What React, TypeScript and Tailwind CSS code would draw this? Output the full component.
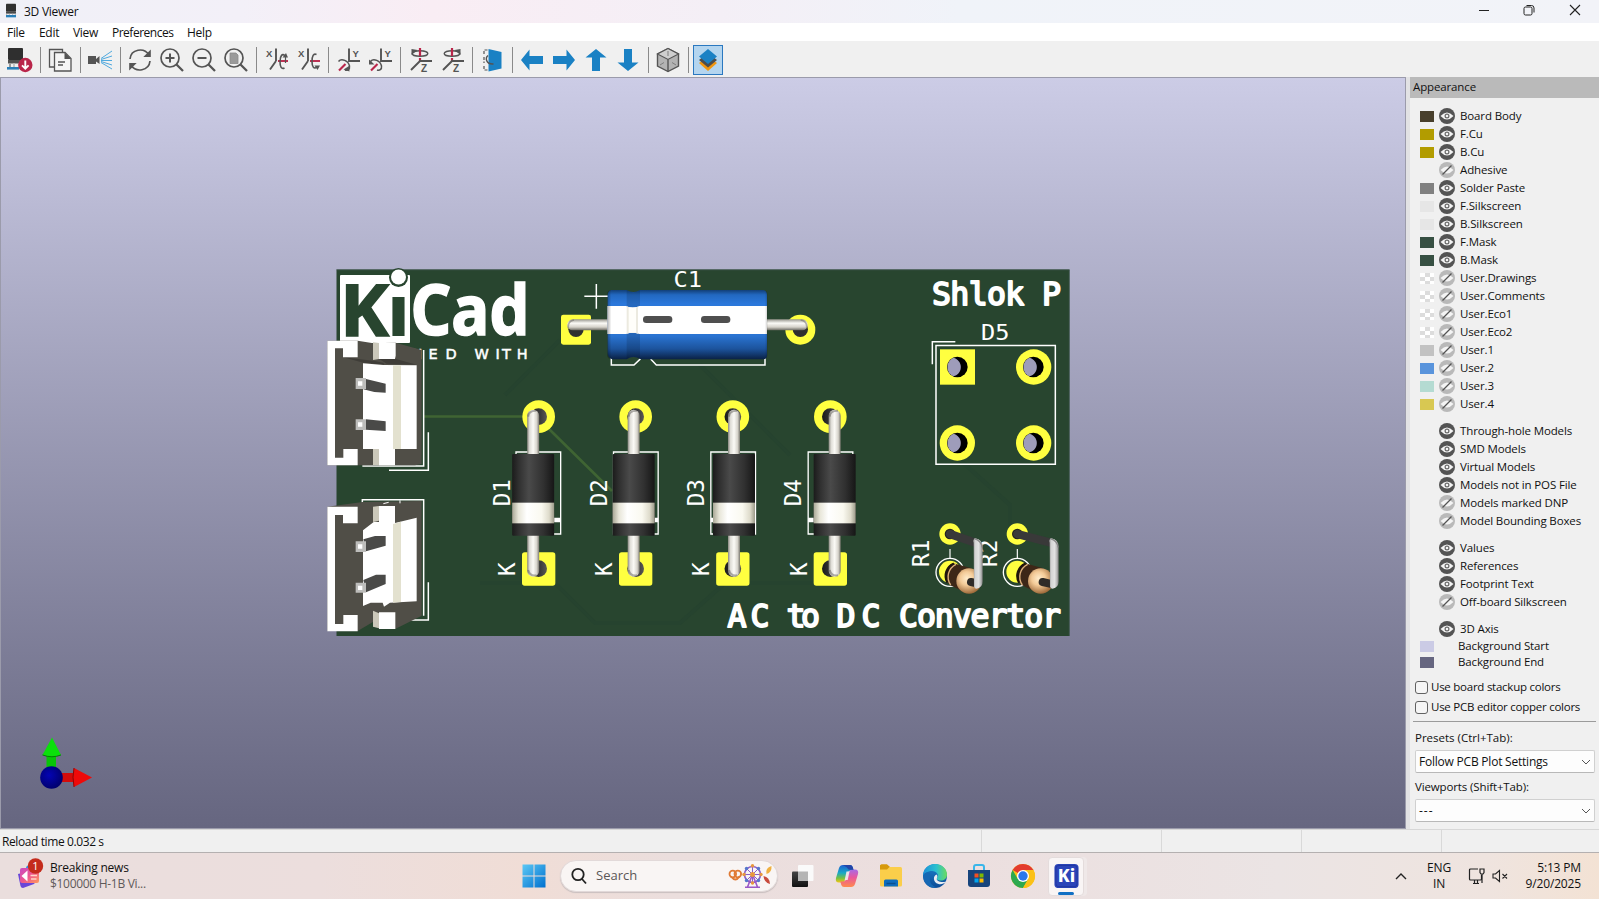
import React from "react";

type Kids = { children?: React.ReactNode };

/* ---------- toolbar icons, drawn on a 26 unit grid ---------- */
const G = "#545454";
const R = "#b9264a";
const B = "#1a81c4";

function Ico({ children }: Kids) {
  return (
    <svg width="26" height="26" viewBox="0 0 26 26" fill="none" stroke={G} strokeWidth="1.7">
      {children}
    </svg>
  );
}

function Chip({ size = 24 }: { size?: number }) {
  return (
    <svg width={size} height={size} viewBox="0 0 24 24">
      <rect x="3" y="1" width="15" height="12" rx="1" fill="#303030" />
      <rect x="3" y="13" width="15" height="3" fill="#4a4a4a" />
      <path d="M4 16v5M8 16v4M13 16v4M17 16v5" stroke="#bbb" strokeWidth="1.6" />
      <rect x="3" y="18" width="15" height="3.500" fill="#2a7fb8" />
    </svg>
  );
}

const ReloadBoard = () => (
  <Ico>
    <g stroke="none">
      <rect x="1" y="1" width="15" height="12" rx="1" fill="#2f2f2f" />
      <rect x="1" y="13" width="15" height="3.5" fill="#505050" />
      <rect x="2" y="16.5" width="2" height="4" fill="#999" />
      <rect x="6" y="16.5" width="2" height="4" fill="#c4c4c4" />
      <rect x="0" y="20" width="12" height="2.6" fill="#2a7fb8" />
      <circle cx="18.3" cy="18" r="7.2" fill={R} />
    </g>
    <path d="M18.3 13.5v8M15 18.4l3.3 3.3 3.3-3.3" stroke="#fff" strokeWidth="1.9" />
  </Ico>
);
const Copy = () => (
  <Ico>
    <path d="M7 20H2.5V2.5h13V6" strokeWidth="1.3" />
    <path d="M7.5 5.5h10.500l6 6v12.500h-16.500z" fill="#f5f5f5" strokeWidth="1.3" />
    <path d="M17.500 5.500v6.500h6.500z" fill={G} stroke="none" />
    <path d="M11 15h7M11 18h5" strokeWidth="1.300" />
  </Ico>
);
const Raytrace = () => (
  <Ico>
    <path d="M1 9h8v3l3.500-3v8L9 14.500V17H1z" fill={G} stroke="none" />
    <path d="M14 11.500L25 4M14 12.500L25 9M14 13.500L25 13.500M14 14.500L25 18M14 15.500L25 22" stroke="#4fa9de" strokeWidth="1" />
  </Ico>
);
const Refresh = () => (
  <Ico>
    <path d="M3 12C4 2 17 0 22 8" />
    <path d="M23.800 2.500v7.500h-7.500z" fill={G} stroke="none" />
    <path d="M23 14C22 24 9 26 4 18" />
    <path d="M2.200 23.500V16h7.500z" fill={G} stroke="none" />
  </Ico>
);
function Lens({ children }: Kids) {
  return (
    <Ico>
      <circle cx="11" cy="11" r="9" />
      <path d="M17.500 17.500L24 24" strokeWidth="2.300" />
      {children}
    </Ico>
  );
}
const ZoomIn = () => (
  <Lens>
    <path d="M6.500 11h9M11 6.500v9" strokeWidth="2" />
  </Lens>
);
const ZoomOut = () => (
  <Lens>
    <path d="M6.500 11h9" strokeWidth="2" />
  </Lens>
);
const ZoomFit = () => (
  <Lens>
    <path d="M7 6h6l2 2v8.500H7z" fill="#9a9a9a" stroke="#8a8a8a" strokeWidth="0.800" />
  </Lens>
);
const RotX = ({ flip = false }: { flip?: boolean }) => (
  <Ico>
    <text x="3" y="9.500" fontSize="9.500" fontWeight="700" fontFamily="Liberation Sans" fill={G} stroke="none">X</text>
    <path d="M13 1.500v12.500M13 14L7 22.500" strokeWidth="1.900" />
    <path d="M15 14H25" stroke={R} strokeWidth="1.900" />
    {flip ? (
      <g>
        <path d="M21.500 7.500C18.500 6 17 9 17 14.500C17 20 19 22.500 22 20" strokeWidth="1.600" />
        <path d="M19.500 18.500h5.500l-2.500 4.500z" fill={G} stroke="none" />
      </g>
    ) : (
      <g>
        <path d="M22 9C19.500 5.500 17 9 17 14.500C17 20 18.500 22.500 21.500 21" strokeWidth="1.600" />
        <path d="M19.500 10.500h5.500l-2-4.500z" fill={G} stroke="none" />
        <path d="M22.500 10v6" strokeWidth="1.200" />
      </g>
    )}
  </Ico>
);
const RotY = ({ flip = false }: { flip?: boolean }) => (
  <Ico>
    <text x="17.500" y="9.500" fontSize="9.500" fontWeight="700" fontFamily="Liberation Sans" fill={G} stroke="none">Y</text>
    <path d="M14 1.500v12.500H25" strokeWidth="1.900" />
    <path d="M10.500 17L4 23.500" stroke={R} strokeWidth="2.200" />
    <path d="M3.500 14.500C6.500 10.500 13.500 14 14.500 19C15 22.500 12.500 24 10 23" strokeWidth="1.500" />
    {flip ? (
      <path d="M2 12.500v5h5.500z" fill={G} stroke="none" />
    ) : (
      <path d="M8.500 22.500l5.500-3.500.5 5.500z" fill={G} stroke="none" />
    )}
  </Ico>
);
const RotZ = ({ flip = false }: { flip?: boolean }) => (
  <Ico>
    <text x="14" y="25" fontSize="10" fontWeight="700" fontFamily="Liberation Sans" fill={G} stroke="none">Z</text>
    <ellipse cx="13" cy="6.500" rx="7.800" ry="2.800" strokeWidth="1.400" />
    <path d="M13 1v8M13 11v3" stroke={R} strokeWidth="2.200" />
    <path d="M4 23L13 14H25" strokeWidth="1.900" />
    {flip ? (
      <path d="M15.500 3l6-1v6z" fill={G} stroke="none" />
    ) : (
      <path d="M10.500 3l-6-1v6z" fill={G} stroke="none" />
    )}
  </Ico>
);
const FlipBoard = () => (
  <Ico>
    <path d="M9.500 2l13 3v16.500L9.500 24.500z" fill={B} stroke="none" />
    <path d="M8.500 3H5v4M5 19v4H8.500M5 10v6" strokeWidth="1.200" strokeDasharray="3 1.500" />
    <path d="M9 8.500C6 11 7 17.500 14.500 17" strokeWidth="1.400" />
  </Ico>
);
const Arrow = ({ turn }: { turn: number }) => (
  <Ico>
    <path transform={`rotate(${turn} 13 13)`} d="M2 13L10.500 2.500V9H24v8H10.500v6.500z" fill={B} stroke="none" />
  </Ico>
);
const Cube = () => (
  <Ico>
    <path d="M13 1.500L23.500 7v12L13 24.500 2.500 19V7z" fill="#b3b3b3" strokeWidth="1.400" />
    <path d="M13 1.500L23.500 7 13 12.500 2.500 7z" fill="#cfcfcf" strokeWidth="1.100" />
    <path d="M13 12.500v12" strokeWidth="1.400" />
    <path d="M13 4v5M5 18l4-2.500M21 18l-4-2.500" stroke="#777" strokeWidth="0.900" />
  </Ico>
);
const Layers = () => (
  <Ico>
    <path d="M13 9.500l9 6.500L13 24 4 16z" fill="#f0960f" stroke="none" />
    <path d="M13 6l9 7-9 7.500L4 13z" fill="#4d4d4d" stroke="none" />
    <path d="M13 2L22 9.500 13 17 4 9.500z" fill={B} stroke="none" />
  </Ico>
);

const Tool = ({ children }: Kids) => <div className="flex h-8 w-8 items-center justify-center">{children}</div>;
const Sep = () => (
  <div className="flex h-[26px] w-2 justify-center">
    <div className="h-full w-px bg-[#8a8a8a]" />
  </div>
);

/* ---------- 3D scene ---------- */
const MONO = '"DejaVu Sans Mono", monospace';
const YEL = "#ffff40";
const DARK = "#504e47";

function Connector1() {
  return (
    <g>
      <path d="M127 618H311V270M207 631H325V517" fill="none" stroke="#fff" strokeWidth="4.500" />
      <path fill={DARK} d="M22 242H113L160 250 227 248 305 270V612L285 616H22z" />
      <path fill="#3f3d38" d="M70 292L165 303 191 309V314L130 308zM177 296L225 296 290 314 200 311z" />
      <path fill="#fff" d="M129 310L190 315 290 316V567H129z" />
      <path fill="#e3e1cf" d="M219 316H243V567H219z" />
      <path fill="#fff" d="M22 242H113V292H69V265H45V593H70V567H113V616H22z" />
      <path fill="#cbc8ba" d="M159 247L177 249V297L159 300zM159 567H177V615H159z" />
      <path fill="#fff" d="M177 249L227 248V287L225 297H177zM177 567H225V616H177z" />
      <path fill="#4a4a48" d="M138 357L197 371V398L163 396 130 388zM138 478L197 484V513L138 509z" />
      <path fill="#bdbdbb" d="M107 354H138V387H107zM107 478H138V510H107z" />
      <path fill="#fff" d="M114 364H127V377H114zM114 487H127V500H114z" />
    </g>
  );
}
function Connector2() {
  return (
    <g>
      <path d="M127 728V719H311V1067M325 967V1080H272" fill="none" stroke="#fff" strokeWidth="4.500" />
      <path fill={DARK} d="M22 740L128 726 305 723V1067L227 1106 160 1085 113 1113H22z" />
      <path d="M190 731L206 727M240 721V730" stroke="#fff" strokeWidth="3" />
      <path fill="#fff" d="M129 811L162 785 225 789 290 773V1024L210 1028 192 1040 188 1028H152L129 1038z" />
      <path fill="#e3e1cf" d="M219 792L243 785V1026L219 1028z" />
      <path fill="#fff" d="M22 740H113V790H69V765H45V1092H70V1065H113V1114H22z" />
      <path fill="#cbc8ba" d="M159 740L177 738V782L159 786zM159 1052L177 1060V1105L159 1100z" />
      <path fill="#fff" d="M177 738H225V790H177zM177 1057H226V1107H177z" />
      <path fill="#4a4a48" d="M130 838L165 828H197V857L138 874zM130 960L168 944H197V972L138 997z" />
      <path fill="#bdbdbb" d="M107 844H138V876H107zM107 968H138V998H107z" />
      <path fill="#fff" d="M114 853H127V866H114zM114 977H127V990H114z" />
    </g>
  );
}

const diodes = [
  { name: "D1", pad: 176, body: 159.5, silk: 108 },
  { name: "D2", pad: 467, body: 461, silk: 400.5 },
  { name: "D3", pad: 758.5, body: 762, silk: 692.5 },
  { name: "D4", pad: 1051, body: 1064, silk: 984.5 },
];

function Diode({ name, pad, body, silk }: (typeof diodes)[number]) {
  return (
    <g>
      <circle cx={pad} cy={80} r={49} fill={YEL} />
      <rect x={pad - 50} y={487} width={100} height={100} rx={8} fill={YEL} />
      <circle cx={pad} cy={80} r={25} fill="url(#hole)" />
      <circle cx={pad} cy={536} r={25} fill="url(#hole)" />
      <path d={`M${silk} 186H${silk + 134}V432H${silk}z`} fill="none" stroke="#fff" strokeWidth="4" />
      <path d={`M${silk} 390H${silk + 134}`} stroke="#fff" strokeWidth="14" />
      <rect x={body - 18} y={59} width={36} height={146} rx={18} fill="url(#lead)" />
      <rect x={body - 18} y={420} width={36} height={140} rx={18} fill="url(#lead)" />
      <path d={`M${body - 15} 80Q${body - 14} 61 ${body + 10} 62M${body - 15} 540Q${body - 10} 560 ${body + 10} 556`} fill="none" stroke="#55534e" strokeOpacity=".45" strokeWidth="6" />
      <rect x={body - 63} y={192} width={126} height={245} rx={3} fill="url(#body)" />
      <rect x={body - 63} y={338} width={126} height={62} fill="url(#band)" />
      <text transform={`translate(${pad - 87} 349) rotate(-90)`} fontFamily={MONO} fontSize="71" textLength="82" lengthAdjust="spacingAndGlyphs" fill="#fff">{name}</text>
      <text transform={`translate(${pad - 71} 558) rotate(-90)`} fontFamily={MONO} fontSize="68" textLength="42" fill="#fff">K</text>
    </g>
  );
}

function Resistor({ dx, body, lead }: { dx: number; body: number; lead: number }) {
  return (
    <g transform={`translate(${dx} 0)`}>
      <path d="M180 867V895" stroke="#fff" strokeWidth="3.500" />
      <circle cx="180" cy="937" r="42" fill="none" stroke="#fff" strokeWidth="4" />
      <circle cx="180" cy="935" r="33" fill={YEL} />
      <circle cx="180" cy="822" r="32" fill={YEL} />
      <circle cx="180" cy="822" r="16" fill="#222" />
      <path d={`M180 822L${255 + lead} 848`} stroke="#393939" strokeWidth="25" strokeLinecap="round" />
      <g transform={`translate(${body} 0)`}>
        <path fill="#3d2717" d="M190 910A38 38 0 0 0 180 975L222 996L245 925z" />
        <path d="M192 911A40 40 0 0 0 173 968" fill="none" stroke="#20150c" strokeWidth="8" />
        <path d="M198 913A42 42 0 0 0 182 975" fill="none" stroke="#ddb07a" strokeWidth="4" />
        <circle cx="237" cy="963" r="38" fill="url(#tan)" />
        <path d="M243 966L264 971" stroke="#2f2b28" strokeWidth="24" strokeLinecap="round" />
      </g>
      <g transform={`translate(${lead} 0)`}>
        <path fill="url(#wire)" d="M251 848Q247 840 255 835Q278 838 278 862V964Q278 984 260 986Q254 986 252 980z" />
        <path d="M253 836Q274 842 276 862" fill="none" stroke="#8a8a8a" strokeWidth="4" />
      </g>
    </g>
  );
}

function Hole({ x, y }: { x: number; y: number }) {
  return (
    <g>
      <circle cx={x} cy={y} r={31} fill="#000" />
      <path d={`M${x - 12} ${y - 28}A31 31 0 0 0 ${x - 12} ${y + 28}C${x + 18} ${y + 20} ${x + 18} ${y - 20} ${x - 12} ${y - 28}z`} fill="#9e9cba" />
    </g>
  );
}

function Scene() {
  return (
    <svg className="block h-full w-full" viewBox="1 78 1404 750" preserveAspectRatio="none">
      <defs>
        <linearGradient id="lead"><stop offset="0" stopColor="#87857e" /><stop offset=".2" stopColor="#dedcd6" /><stop offset=".5" stopColor="#fbfaf6" /><stop offset=".8" stopColor="#d6d3cb" /><stop offset="1" stopColor="#7a7870" /></linearGradient>
        <linearGradient id="leadH" x2="0" y2="1"><stop offset="0" stopColor="#99978f" /><stop offset=".35" stopColor="#fbfaf6" /><stop offset=".7" stopColor="#d6d3cb" /><stop offset="1" stopColor="#6a6860" /></linearGradient>
        <linearGradient id="body"><stop offset="0" stopColor="#1b1b1b" /><stop offset=".15" stopColor="#2f2f2f" /><stop offset=".4" stopColor="#4a4a4a" /><stop offset=".75" stopColor="#303030" /><stop offset="1" stopColor="#161616" /></linearGradient>
        <linearGradient id="band"><stop offset="0" stopColor="#a9a796" /><stop offset=".15" stopColor="#e8e6d9" /><stop offset=".35" stopColor="#fff" /><stop offset=".7" stopColor="#faf9f0" /><stop offset=".88" stopColor="#dedbcb" /><stop offset="1" stopColor="#9b9989" /></linearGradient>
        <linearGradient id="blue" x2="0" y2="1"><stop offset="0" stopColor="#123f78" /><stop offset=".07" stopColor="#2268c0" /><stop offset=".2" stopColor="#2b78db" /><stop offset=".66" stopColor="#2a74d2" /><stop offset=".85" stopColor="#1c539c" /><stop offset="1" stopColor="#0a2145" /></linearGradient>
        <linearGradient id="hole"><stop offset="0" stopColor="#1a1a1a" /><stop offset=".6" stopColor="#3b3b3b" /><stop offset="1" stopColor="#5b5854" /></linearGradient>
        <linearGradient id="wire" gradientUnits="userSpaceOnUse" x1="250" x2="279" y1="0" y2="0"><stop offset="0" stopColor="#9a9a9a" /><stop offset=".2" stopColor="#d4d4d4" /><stop offset=".55" stopColor="#e2e2e2" /><stop offset=".8" stopColor="#b4b4b4" /><stop offset="1" stopColor="#6f6f6f" /></linearGradient>
        <linearGradient id="side"><stop offset="0" stopColor="#000" stopOpacity=".3" /><stop offset=".025" stopColor="#000" stopOpacity="0" /><stop offset=".985" stopColor="#000" stopOpacity="0" /><stop offset="1" stopColor="#000" stopOpacity=".2" /></linearGradient>
        <radialGradient id="tan" cx=".42" cy=".4" r=".6"><stop offset="0" stopColor="#ffeccb" /><stop offset=".45" stopColor="#f3ca97" /><stop offset="1" stopColor="#a06c3c" /></radialGradient>
        <radialGradient id="ball" cx=".4" cy=".4" r=".6"><stop offset="0" stopColor="#0404b4" /><stop offset="1" stopColor="#01016f" /></radialGradient>
      </defs>

      <rect x="336.500" y="269.500" width="733" height="366.500" fill="#28452f" />
      <path d="M336.500 269.800H1069.500M1069.300 270V636" stroke="#435a55" strokeWidth=".7" />
      <path fill="none" stroke="#26432f" strokeWidth="4" d="M505 395L560 340M700 365L790 455M480 583H555L595 623H680L725 583H850M960 460L1010 505V530" />
      <path d="M423 416.500H530M548 428L612 491" stroke="#3f6433" strokeWidth="2.600" />

      <g fill="#fff">
        <path d="M341 275H409Q410 275 410 276V342Q410 343 409 343H341Q340 343 340 342V276Q340 275 341 275z" />
        <circle cx="398.500" cy="277.500" r="9.500" fill="#28452f" />
        <circle cx="398.500" cy="277" r="7.500" />
        <g fontFamily='"Noto Sans", sans-serif' fontWeight="700" strokeWidth="1.500">
          <text x="340" y="335.500" fontSize="71" textLength="49" lengthAdjust="spacingAndGlyphs" fill="#28452f" stroke="#28452f">K</text>
          <text x="386.500" y="335.500" fontSize="71" textLength="24" lengthAdjust="spacingAndGlyphs" fill="#28452f">ı</text>
          <text x="410.500" y="335" fontSize="70" textLength="119" lengthAdjust="spacingAndGlyphs" stroke="#fff">Cad</text>
        </g>
        <text x="411.500 428.500 445.500 462 474.500 495.500 502 516.800" y="359" fontFamily='"DejaVu Sans", sans-serif' fontSize="14.500" stroke="#fff" strokeWidth=".5">NED WITH</text>
        <g fontFamily={MONO}>
          <text x="673.500" y="286.500" fontSize="22" textLength="28.500" lengthAdjust="spacingAndGlyphs">C1</text>
          <text x="981" y="340" fontSize="22" textLength="28.500" lengthAdjust="spacingAndGlyphs">D5</text>
        </g>
        <g fontFamily={MONO} stroke="#fff" strokeWidth="1.900" strokeLinejoin="round" fontSize="31.500">
          <text x="932" y="304.500" textLength="129" lengthAdjust="spacing">Shlok P</text>
          <text x="727.500" y="626.500" textLength="42" lengthAdjust="spacing">AC</text>
          <text x="786.500" y="626.500" textLength="33.500" lengthAdjust="spacing">to</text>
          <text x="836.500" y="626.500" textLength="44" lengthAdjust="spacing">DC</text>
          <text x="899" y="626.500" textLength="162" lengthAdjust="spacing">Convertor</text>
        </g>
      </g>

      <g transform="translate(320 260) scale(.333333)">
        <Connector1 />
        <Connector2 />
      </g>

      <g transform="translate(480 260) scale(.333333)">
        <path d="M313 109H390M349 72V146M394 290V315H462L482 296M512 297L529 315H855V288" fill="none" stroke="#fff" strokeWidth="4.500" />
        <rect x="243" y="164" width="90" height="90" rx="7" fill={YEL} />
        <circle cx="961" cy="209" r="45" fill={YEL} />
        <circle cx="288" cy="208" r="23" fill="#2f2f2f" />
        <circle cx="961" cy="208" r="23" fill="#2f2f2f" />
        <rect x="262" y="178" width="140" height="33" rx="16" fill="url(#leadH)" />
        <rect x="840" y="178" width="143" height="33" rx="16" fill="url(#leadH)" />
        <path d="M265 205Q262 184 282 180M980 205Q983 184 962 180" fill="none" stroke="#6b6963" strokeOpacity=".5" strokeWidth="5" />
        <path fill="url(#blue)" d="M394 90H440Q460 102 480 90H850Q861 92 861 104V286Q861 298 850 298H482Q460 284 440 298H396Q383 294 383 280V106Q383 92 394 90z" />
        <path fill="#000" opacity=".13" d="M440 91Q460 102 480 91V297Q460 284 440 297z" />
        <path fill="#fff" d="M382 138H438Q458 148 478 138H861V222H478Q458 215 438 222H382z" />
        <path fill="#eceae0" d="M440 139Q458 148 474 140V221Q458 215 440 221z" />
        <path fill="#fffefa" d="M446 142H468V218H446z" />
        <rect x="382" y="90" width="480" height="208" rx="12" fill="url(#side)" />
        <rect x="489" y="168" width="88" height="21" rx="10" fill="#4f4f4f" />
        <rect x="663" y="168" width="88" height="21" rx="10" fill="#4f4f4f" />
      </g>

      <g transform="translate(480 390) scale(.333333)">
        {diodes.map((d) => (
          <Diode key={d.name} {...d} />
        ))}
      </g>

      <g transform="translate(890 260) scale(.333333)">
        <path d="M138 256.500H496V613H138zM127 313V245H196" fill="none" stroke="#fff" strokeWidth="4.500" />
        <rect x="150" y="268" width="105" height="106" fill={YEL} />
        <circle cx="431" cy="321" r="53" fill={YEL} />
        <circle cx="202" cy="549" r="53" fill={YEL} />
        <circle cx="431" cy="549" r="53" fill={YEL} />
        <Hole x={202} y={321} />
        <Hole x={430} y={321} />
        <Hole x={202} y={549} />
        <Hole x={430} y={549} />
        <text transform="translate(118 921) rotate(-90)" fontFamily={MONO} fontSize="68" textLength="82" lengthAdjust="spacingAndGlyphs" fill="#fff">R1</text>
        <text transform="translate(321 921) rotate(-90)" fontFamily={MONO} fontSize="68" textLength="82" lengthAdjust="spacingAndGlyphs" fill="#fff">R2</text>
        <Resistor dx={0} body={0} lead={0} />
        <Resistor dx={202} body={13} lead={26} />
      </g>

      <rect x="46.500" y="754" width="9.500" height="16" fill="#08c508" />
      <path d="M52 737.500L61 755Q52 758 42.500 755z" fill="#0be00b" />
      <path d="M42.500 755Q52 758.500 61 755" stroke="#067a06" fill="none" />
      <rect x="60" y="773" width="15" height="9" fill="#d40b0b" />
      <path d="M92 777.500L74 768Q72 777 74 787z" fill="#ee0a0a" />
      <path d="M74 768Q72 777 74 787" stroke="#8a0606" fill="none" />
      <circle cx="51.500" cy="777.500" r="11.300" fill="url(#ball)" />
    </svg>
  );
}

/* ---------- appearance panel ---------- */
type Row = { name: string; on: boolean; color?: string };
const layers: Row[] = [
  { name: "Board Body", on: true, color: "bg-[#483f2c]" },
  { name: "F.Cu", on: true, color: "bg-[#b29c00]" },
  { name: "B.Cu", on: true, color: "bg-[#b29c00]" },
  { name: "Adhesive", on: false },
  { name: "Solder Paste", on: true, color: "bg-[#808080]" },
  { name: "F.Silkscreen", on: true, color: "bg-[#e6e6e6]" },
  { name: "B.Silkscreen", on: true, color: "bg-[#e6e6e6]" },
  { name: "F.Mask", on: true, color: "bg-[#375043]" },
  { name: "B.Mask", on: true, color: "bg-[#375043]" },
  { name: "User.Drawings", on: false, color: "check" },
  { name: "User.Comments", on: false, color: "check" },
  { name: "User.Eco1", on: false, color: "check" },
  { name: "User.Eco2", on: false, color: "check" },
  { name: "User.1", on: false, color: "bg-[#c2c2c2]" },
  { name: "User.2", on: false, color: "bg-[#5994dc]" },
  { name: "User.3", on: false, color: "bg-[#b4dbd2]" },
  { name: "User.4", on: false, color: "bg-[#d8c852]" },
];
const models: Row[] = [
  { name: "Through-hole Models", on: true },
  { name: "SMD Models", on: true },
  { name: "Virtual Models", on: true },
  { name: "Models not in POS File", on: true },
  { name: "Models marked DNP", on: false },
  { name: "Model Bounding Boxes", on: false },
];
const texts: Row[] = [
  { name: "Values", on: true },
  { name: "References", on: true },
  { name: "Footprint Text", on: true },
  { name: "Off-board Silkscreen", on: false },
];

const Eye = ({ on }: { on: boolean }) => (
  <svg width="16" height="16" viewBox="0 0 16 16">
    <circle cx="8" cy="8" r="8" fill={on ? "#545454" : "#b9b9b9"} />
    <path d="M1.500 8Q8 1 14.500 8 8 15 1.500 8z" fill="#f4f4f4" />
    {on ? (
      <circle cx="8" cy="8" r="1.900" fill="#f4f4f4" stroke="#6a6a6a" strokeWidth="1.200" />
    ) : (
      <path d="M3.500 12.500L12.500 3.500" stroke="#545454" strokeWidth="1.300" />
    )}
  </svg>
);

const Swatch = ({ color }: { color?: string }) => {
  if (!color) return <div className="w-3.5" />;
  if (color === "check")
    return (
      <svg width="14" height="11" viewBox="0 0 14 11">
        <rect width="14" height="11" fill="#fff" />
        <path d="M5 0h5v4H5zM0 4h5v4H0zM10 4h4v4h-4zM5 8h5v3H5z" fill="#dcdcdc" />
      </svg>
    );
  return <div className={`h-[11px] w-3.5 ${color}`} />;
};

const LayerRow = ({ name, on, color }: Row) => (
  <div className="flex h-[18px] items-center pl-2.5">
    <Swatch color={color} />
    <div className="ml-[5px]"><Eye on={on} /></div>
    <span className="ml-[5px]">{name}</span>
  </div>
);

const Check = ({ children }: Kids) => (
  <div className="flex h-5 items-center pl-[5px]">
    <div className="h-[13px] w-[13px] rounded-[3px] border border-[#626262] bg-[#f6f6f6]" />
    <span className="ml-[3px] tracking-[-0.25px]">{children}</span>
  </div>
);

const Select = ({ children }: Kids) => (
  <div className="ml-[5px] flex h-[23px] w-[180px] items-center justify-between rounded-[2px] border border-[#d0d0d0] border-b-[#b8b8b8] bg-[#fdfdfd] pr-[3px] pl-[3px] text-[12px] tracking-[-0.22px]">
    {children}
    <svg width="10" height="6" viewBox="0 0 10 6"><path d="M1 1l4 4 4-4" fill="none" stroke="#555" /></svg>
  </div>
);

function Panel() {
  return (
    <aside className="w-[189px] text-[11.500px] leading-[18px] tracking-[-0.13px]">
      <div className="h-[21px] bg-[#bababa] pl-[3px] leading-[20px]">Appearance</div>
      <div className="pt-[9px]">{layers.map((r) => <LayerRow key={r.name} {...r} />)}</div>
      <div className="pt-[9px]">{models.map((r) => <LayerRow key={r.name} {...r} />)}</div>
      <div className="pt-[9px]">{texts.map((r) => <LayerRow key={r.name} {...r} />)}</div>
      <div className="pt-[9px]"><LayerRow name="3D Axis" on /></div>
      <div className="flex h-4 items-center pl-2.5"><Swatch color="bg-[#cbcbe5]" /><span className="ml-6">Background Start</span></div>
      <div className="flex h-4 items-center pl-2.5"><Swatch color="bg-[#666680]" /><span className="ml-6">Background End</span></div>
      <div className="pt-[7px]">
        <Check>Use board stackup colors</Check>
        <Check>Use PCB editor copper colors</Check>
      </div>
      <div className="mt-1 mr-[3px] ml-[3px] h-px bg-[#9b9b9b]" />
      <div className="mt-[7px] h-[21px] pl-[5px] tracking-normal">Presets (Ctrl+Tab):</div>
      <Select><span>Follow PCB Plot Settings</span></Select>
      <div className="mt-[5px] h-[21px] pl-[5px]">Viewports (Shift+Tab):</div>
      <Select><span className="tracking-[1px]">---</span></Select>
    </aside>
  );
}

/* ---------- taskbar ---------- */
const Slot = ({ children }: Kids) => <div className="flex h-full w-11 items-center justify-center">{children}</div>;

const WinLogo = () => (
  <svg width="24" height="24" viewBox="0 0 24 24">
    <defs><linearGradient id="win" x2="1" y2="1"><stop offset="0" stopColor="#5cc8f5" /><stop offset="1" stopColor="#0070cf" /></linearGradient></defs>
    <path d="M.5.500h11v11H.5zM12.500.500h11v11h-11zM.5 12.500h11v11H.5zM12.500 12.500h11v11h-11z" fill="url(#win)" />
  </svg>
);
const TaskView = () => (
  <svg width="26" height="26" viewBox="0 0 26 26">
    <defs><linearGradient id="tv" x2="0" y2="1"><stop offset="0" stopColor="#444" /><stop offset="1" stopColor="#111" /></linearGradient></defs>
    <rect x="2" y="8.500" width="16" height="15.500" rx="1" fill="url(#tv)" />
    <rect x="8" y="2" width="15.500" height="16" rx="1" fill="#fafafa" />
    <path d="M8 8.500h10V18H8z" fill="#b5b5b5" />
  </svg>
);
const Copilot = () => (
  <svg width="26" height="26" viewBox="0 0 26 26">
    <defs>
      <linearGradient id="cp1" x2="0" y2="1"><stop offset="0" stopColor="#1d5fd0" /><stop offset=".45" stopColor="#18a8c8" /><stop offset=".75" stopColor="#75c043" /><stop offset="1" stopColor="#f3c613" /></linearGradient>
      <linearGradient id="cp2" x2="0" y2="1"><stop offset="0" stopColor="#a66ae8" /><stop offset=".45" stopColor="#e9579d" /><stop offset="1" stopColor="#ff8a4c" /></linearGradient>
    </defs>
    <path d="M9 2h7q2 0 2.700 2l1 3.500h-3q-2 0-2.700 2L11 17q-.8 2.500-3 2.500H5Q1 19.500 2 15L5 5q1-3 4-3z" fill="url(#cp1)" />
    <path d="M17 24h-7q-2 0-2.700-2l-1-3.500h3q2 0 2.700-2L15 9q.8-2.500 3-2.500h3q4 0 3 4.500L21 21q-1 3-4 3z" fill="url(#cp2)" />
    <path d="M12.500 8.500h3L13.700 17h-3z" fill="#eee4e8" />
    <path d="M9 2h7q2 0 2.700 2l.8 2.800h-3.500Q14 7 13 4.500z" fill="#2345a8" />
  </svg>
);
const Folder = () => (
  <svg width="26" height="26" viewBox="0 0 26 26">
    <path d="M2 3q0-1.500 1.500-1.500H9L12 4v5H2z" fill="#d79a0c" />
    <rect x="2" y="4" width="22" height="19.500" rx="1.500" fill="#fbce4a" />
    <path d="M2 3q0-1.500 1.500-1.500H9l2.500 2.500L9 6.500H2z" fill="#d79a0c" />
    <path d="M6 23.500V18q0-1.500 1.500-1.500h11Q20 16.500 20 18v5.500z" fill="#0f6dbd" />
    <path d="M8.500 20.500h9" stroke="#0a4f90" strokeWidth="1.500" />
  </svg>
);
const Edge = () => (
  <svg width="26" height="26" viewBox="0 0 26 26">
    <defs>
      <linearGradient id="eg1"><stop offset="0" stopColor="#1b8fd8" /><stop offset=".55" stopColor="#2bc0cf" /><stop offset="1" stopColor="#6bdc5e" /></linearGradient>
      <linearGradient id="eg2" x2="0" y2="1"><stop offset="0" stopColor="#1a83cc" /><stop offset="1" stopColor="#0d4a96" /></linearGradient>
    </defs>
    <circle cx="13" cy="13" r="12" fill="url(#eg2)" />
    <path d="M1 13C1 6 6 1 13 1s12 5 12 10.500c0 4-3 6-6 6s-5-1-4-2.500c2.500-3-.5-7-5-7C5.500 8 1.500 10.500 1 13z" fill="url(#eg1)" />
    <path d="M14.500 11.500c-3.500 1-4 8 2 9.500 3 .8 5.500-.5 7.500-2-.5-.8-2 .3-4.500 0-3.500-.4-5.500-2-4.500-4 .6-1.200.6-2.500-.5-3.500z" fill="#e8ecf2" />
    <path d="M9 12C6 17 9 23 15 24.500 6 26 1 19 1.200 12.500 3 9 8 8 9 12z" fill="#1668b4" />
  </svg>
);
const Store = () => (
  <svg width="26" height="26" viewBox="0 0 26 26">
    <path d="M8 7V4q0-2 2-2h6q2 0 2 2v3" fill="none" stroke="#3ab6ea" strokeWidth="2" />
    <path d="M2 7h22v14q0 3-3 3H5q-3 0-3-3z" fill="#17447c" />
    <path d="M8.500 10.500h4v4h-4z" fill="#f25022" /><path d="M13.500 10.500h4v4h-4z" fill="#7fba00" />
    <path d="M8.500 15.500h4v4h-4z" fill="#00a4ef" /><path d="M13.500 15.500h4v4h-4z" fill="#ffb900" />
  </svg>
);
const Chrome = () => (
  <svg width="26" height="26" viewBox="0 0 26 26">
    <circle cx="13" cy="13" r="12" fill="#fbc116" />
    <path d="M13 13L2.600 7A12 12 0 0 1 23.400 7z" fill="#e33b2e" />
    <path d="M2.600 7A12 12 0 0 0 13 25L18.200 16 13 13 7.800 16z" fill="#2da94f" />
    <path d="M13 7H23.400A12 12 0 0 1 13 25L18.200 16z" fill="#fbc116" />
    <circle cx="13" cy="13" r="6" fill="#fff" />
    <circle cx="13" cy="13" r="4.700" fill="#2b78ea" />
  </svg>
);
const KiApp = () => (
  <svg width="25" height="25" viewBox="0 0 25 25">
    <rect width="25" height="25" rx="4" fill="#2b44b8" />
    <rect x="1.500" y="1.500" width="22" height="22" rx="3" fill="none" stroke="#2036a0" />
    <text x="3.500" y="19" fontFamily='"Noto Sans", sans-serif' fontWeight="800" fontSize="18" textLength="18" lengthAdjust="spacingAndGlyphs" fill="#fff">Ki</text>
  </svg>
);
const Festival = () => (
  <svg width="46" height="26" viewBox="0 0 46 26">
    <g fill="none" stroke="#e07a35" strokeWidth="1.800">
      <circle cx="4.800" cy="11" r="3.300" /><circle cx="9.800" cy="11" r="3.300" /><path d="M3 13.500q4.500 6 8.500 0" />
    </g>
    <g fill="none" stroke="#8a5cc8" strokeWidth="1.600">
      <circle cx="24.500" cy="11.500" r="8" />
      <path d="M24.500 3.500v16M16.500 11.500h16M18.800 5.800l11.400 11.400M30.200 5.800L18.800 17.200" strokeWidth="1" />
      <path d="M24.500 11.500L19.500 24M24.500 11.500L29.500 24M17 24.300h15" stroke="#9a58c8" />
    </g>
    <g fill="#e8973f">
      <circle cx="24.500" cy="2.800" r="1.700" /><circle cx="24.500" cy="20" r="1.700" /><circle cx="16" cy="11.500" r="1.700" /><circle cx="33" cy="11.500" r="1.700" />
    </g>
    <g fill="#5577cc">
      <circle cx="18.500" cy="5.500" r="1.700" /><circle cx="30.500" cy="5.500" r="1.700" /><circle cx="18.500" cy="17.500" r="1.700" /><circle cx="30.500" cy="17.500" r="1.700" />
    </g>
    <circle cx="24.500" cy="11.500" r="2.500" fill="#e8973f" />
    <path d="M43.500 3Q37 5 38.500 11 44 9.500 43.500 3z" fill="#f0b040" />
    <path d="M35.500 13q6 1 6.500 8-6-1.500-6.500-8z" fill="#c84a3c" />
  </svg>
);
const News = () => (
  <svg width="28" height="32" viewBox="0 0 28 32">
    <defs><linearGradient id="nw" x2="1" y2="1"><stop offset="0" stopColor="#c84cc4" /><stop offset=".5" stopColor="#ee558f" /><stop offset="1" stopColor="#ff9a5a" /></linearGradient></defs>
    <path d="M8 9l6-5 4 6-8 8z" fill="#2f8fe0" />
    <path d="M0 16l4-1 15 7-3 4-11 4q-2 0-2.500-2z" fill="#6a46d8" />
    <rect x="2" y="10" width="19" height="15" rx="2" fill="url(#nw)" />
    <path d="M3.500 18l6-5.500v11z" fill="#fff" />
    <path d="M12.500 17.500h6.500M13 21h5.500" stroke="#ffd5c8" strokeWidth="1.500" />
    <circle cx="17.500" cy="8" r="7.700" fill="#c42b1c" />
    <text x="17.500" y="12" textAnchor="middle" fontFamily="Open Sans" fontSize="11" fill="#fff">1</text>
  </svg>
);

function Taskbar() {
  return (
    <footer className="flex h-[47px] border-t border-[#b4b0b0] bg-[linear-gradient(90deg,#eadedd_0%,#ecdedd_20%,#f0ddd6_33%,#ebdedd_42%,#ecdfdf_60%,#ebe4e4_80%,#efe4df_93%,#f3e2d4_100%)] text-[12px]">
      <div className="flex w-[512px] pl-[18px]">
        <div className="pt-[5px]"><News /></div>
        <div className="pt-[7px] pl-1 leading-4 tracking-[-0.22px]">
          <div>Breaking news</div>
          <div className="tracking-[-0.3px] text-[#5f5a5a]">$100000 H-1B Vi...</div>
        </div>
      </div>
      <div className="flex w-11 items-center justify-center"><WinLogo /></div>
      <div className="mt-[7px] ml-[4px] flex h-[32px] w-[218px] items-center rounded-full border border-[#e2d9d9] bg-[#f9f5f4] pl-2.5 text-[13px] text-[#5b5757] shadow-[0_1px_1px_#c9bfbf]">
        <svg width="16" height="18" viewBox="0 0 16 18" fill="none" stroke="#222" strokeWidth="1.800"><circle cx="7" cy="7.500" r="5.700" /><path d="M11 12l4 4.500" /></svg>
        <span className="ml-[9px] w-[132px]">Search</span>
        <Festival />
      </div>
      <div className="ml-[3px] flex">
        <Slot><TaskView /></Slot>
        <Slot><Copilot /></Slot>
        <Slot><Folder /></Slot>
        <Slot><Edge /></Slot>
        <Slot><Store /></Slot>
        <Slot><Chrome /></Slot>
        <div className="mt-1 ml-[3px] flex h-[39px] w-[36px] flex-col items-center rounded-[4px] border border-[#e4dcdc] bg-[#f9f5f5] pt-1.5 shadow-[3px_0_0_#efe8e8]">
          <KiApp />
          <div className="mt-1 h-[3px] w-4 rounded-full bg-[#1170c4]" />
        </div>
      </div>
      <div className="ml-auto flex items-center text-center leading-4">
        <svg width="12" height="7" viewBox="0 0 12 7"><path d="M1 6l5-5 5 5" fill="none" stroke="#222" strokeWidth="1.400" /></svg>
        <div className="ml-[20px] w-6 text-[12px] tracking-[-0.2px]">ENG<br />IN</div>
        <svg className="ml-[17px]" width="18" height="18" viewBox="0 0 18 18" fill="none" stroke="#222" strokeWidth="1.200"><path d="M10 2H2.500Q1.500 2 1.500 3v9q0 1 1 1h10q1 0 1-1V8M5 16.500h6M6.500 13v3.500M9.500 13v3.500" /><path d="M12 2h4v3.500l-1 1.500h-2l-1-1.500zM14 7v9" /></svg>
        <svg className="ml-[6px]" width="17" height="14" viewBox="0 0 17 14" fill="none" stroke="#222" strokeWidth="1.100"><path d="M1 5v4h2.500L7.500 12.500v-11L3.500 5zM10.500 5l4.500 4.500M15 5l-4.500 4.500" /></svg>
        <div className="mr-[18px] ml-[14px] w-[58px] text-right whitespace-nowrap tracking-[-0.15px]">5:13 PM<br />9/20/2025</div>
      </div>
    </footer>
  );
}

export default function App() {
  return (
    <div className="flex h-[899px] w-[1599px] flex-col overflow-hidden bg-[#f0f0f0] font-['Open_Sans','Noto_Sans',sans-serif] text-[12px] text-[#111]">
      <header className="flex h-[23px] items-center bg-[linear-gradient(90deg,#f0f0f7_0%,#f3f0f8_15%,#f9edf4_27%,#f4eff6_45%,#f0f3f9_60%,#f2f3f8_100%)]">
        <div className="flex w-6 justify-center pb-0.5"><Chip size={16} /></div>
        <span className="tracking-[-0.25px]">3D Viewer</span>
        <div className="ml-auto flex items-center pr-[18px] pb-1">
          <svg width="12" height="12" viewBox="0 0 12 12"><path d="M1 6.500h10" stroke="#222" /></svg>
          <svg className="ml-[33px]" width="12" height="12" viewBox="0 0 12 12" fill="none" stroke="#222"><rect x="1" y="3" width="8" height="8" rx="1.500" /><path d="M3.500 1.500h5q2.500 0 2.500 2.500v4.500" /></svg>
          <svg className="ml-[34px]" width="12" height="12" viewBox="0 0 12 12"><path d="M1 1l10 10M11 1L1 11" stroke="#222" strokeWidth="1.100" /></svg>
        </div>
      </header>
      <nav className="flex h-[18px] items-center bg-white pt-0.5 pl-[7px] tracking-[-0.3px]">
        <span className="w-8">File</span>
        <span className="w-[34px]">Edit</span>
        <span className="w-[39px]">View</span>
        <span className="w-[75px] tracking-[-0.5px]">Preferences</span>
        <span>Help</span>
      </nav>
      <div className="flex h-9 items-center pt-0.5 pl-1">
        <Tool><ReloadBoard /></Tool><Sep />
        <Tool><Copy /></Tool><Sep />
        <Tool><Raytrace /></Tool><Sep />
        <Tool><Refresh /></Tool><Tool><ZoomIn /></Tool><Tool><ZoomOut /></Tool><Tool><ZoomFit /></Tool><Sep />
        <Tool><RotX /></Tool><Tool><RotX flip /></Tool><Sep />
        <Tool><RotY /></Tool><Tool><RotY flip /></Tool><Sep />
        <Tool><RotZ /></Tool><Tool><RotZ flip /></Tool><Sep />
        <Tool><FlipBoard /></Tool><Sep />
        <Tool><Arrow turn={0} /></Tool><Tool><Arrow turn={180} /></Tool><Tool><Arrow turn={90} /></Tool><Tool><Arrow turn={270} /></Tool><Sep />
        <Tool><Cube /></Tool><Sep />
        <div className="ml-px flex h-[30px] w-[30px] items-center justify-center border border-[#2a78c0] bg-[#b4d5ef]"><Layers /></div>
      </div>
      <div className="flex h-[752px]">
        <main className="w-[1406px] border border-[#9b9bab] bg-linear-to-b from-[#cccce6] to-[#666680]">
          <Scene />
        </main>
        <div className="w-1 bg-[#e2e2e4]" />
        <Panel />
      </div>
      <div className="flex h-[23px] items-center border-t border-[#d7d7d7] pl-0.5">
        <span className="w-[979px] pt-px tracking-[-0.4px]">Reload time 0.032 s</span>
        <div className="h-[22px] w-[180px] border-l border-[#d9d9d9]" />
        <div className="h-[22px] w-[140px] border-l border-[#d9d9d9]" />
        <div className="h-[22px] w-[140px] border-l border-[#d9d9d9]" />
        <div className="h-[22px] border-l border-[#d9d9d9]" />
      </div>
      <Taskbar />
    </div>
  );
}
